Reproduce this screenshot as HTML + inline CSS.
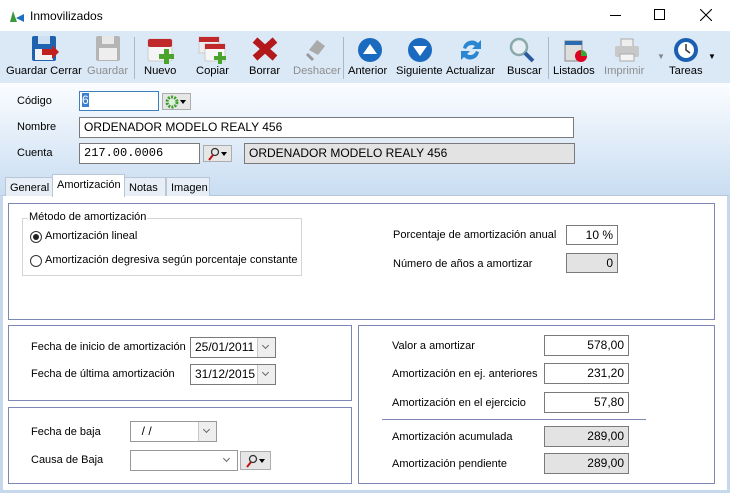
<!DOCTYPE html>
<html><head><meta charset="utf-8"><style>
*{box-sizing:border-box;margin:0;padding:0}
body{width:730px;height:493px;overflow:hidden;font-family:"Liberation Sans",sans-serif;font-size:11px;color:#000;position:relative;background:#fff}
.a{position:absolute}
.tb{left:0;top:31px;width:730px;height:52px;background:#dbe8f6}
.form{left:0;top:83px;width:730px;height:112px;background:linear-gradient(#fbfdff,#c9ddf2)}
.lbl{position:absolute;font-size:11px;white-space:nowrap}
.tl{position:absolute;top:65px;font-size:11.2px;white-space:nowrap;text-align:center}
.in{position:absolute;background:#fff;border:1px solid #7a7a7a;font-size:12px;padding:2px 4px;white-space:nowrap;overflow:hidden}
.g{background:#e3e3e3}
.r{text-align:right}
.pan{position:absolute;border:1px solid #7d87b5;background:#fff}
.btn{position:absolute;background:#e6e6e6;border:1px solid #adadad}
.dd{position:absolute;width:18px;background:#eee;border-left:1px solid #c8c8c8;top:0;bottom:0;right:0}
.dd:after{content:"";position:absolute;left:5px;top:5px;width:4px;height:4px;border-right:1px solid #666;border-bottom:1px solid #666;transform:rotate(45deg)}
.tab{position:absolute;top:177px;height:19px;border:1px solid #b8c6d8;border-bottom:none;background:#e8eef6;font-size:11px;padding:4px 4px}
</style></head><body>
<svg class="a" style="left:9px;top:9px" width="16" height="14"><polygon points="1,13 4,2 8,13" fill="#3a9a3a"/><polygon points="7,9 15,5 15,13" fill="#1f6fc0"/></svg>
<div class="lbl" style="left:30px;top:9px;font-size:12px">Inmovilizados</div>
<div class="a" style="left:610px;top:15px;width:11px;height:1px;background:#000"></div>
<div class="a" style="left:654px;top:9px;width:11px;height:11px;border:1px solid #000"></div>
<svg class="a" style="left:700px;top:9px" width="12" height="12"><path d="M0 0L12 12M12 0L0 12" stroke="#000" stroke-width="1.1"/></svg>

<div class="a tb"></div>
<svg class="a" style="left:30px;top:35px" width="30" height="28"><rect x="2" y="1" width="24" height="25" rx="2" fill="#1f62b0"/><rect x="8" y="1" width="12" height="8" fill="#cfe0f2"/><rect x="5" y="14" width="18" height="11" fill="#f2f2f2"/><path d="M12 14h10v-4l7 7-7 7v-4h-10z" fill="#c02020"/></svg>
<svg class="a" style="left:95px;top:35px" width="26" height="28"><rect x="1" y="1" width="24" height="25" rx="2" fill="#b5b5b5"/><rect x="7" y="1" width="12" height="8" fill="#e8e8e8"/><rect x="4" y="13" width="18" height="12" fill="#eee"/></svg>
<div class="a" style="left:134px;top:37px;width:1px;height:42px;background:#a9b7c8"></div>
<svg class="a" style="left:147px;top:36px" width="30" height="28"><rect x="1" y="3" width="24" height="22" rx="2" fill="#f4f4f4" stroke="#ccc"/><rect x="1" y="3" width="24" height="8" rx="2" fill="#c0282a"/><path d="M17 13h5v5h5v5h-5v5h-5v-5h-5v-5h5z" fill="#4aa32d"/></svg>
<svg class="a" style="left:198px;top:35px" width="30" height="30"><rect x="1" y="2" width="20" height="16" fill="#eee" stroke="#ccc"/><rect x="1" y="2" width="20" height="5" fill="#c0282a"/><rect x="7" y="9" width="20" height="17" fill="#f6f6f6" stroke="#ccc"/><rect x="7" y="9" width="20" height="5" fill="#c0282a"/><path d="M20 17h4v4h4v4h-4v4h-4v-4h-4v-4h4z" fill="#4aa32d"/></svg>
<svg class="a" style="left:252px;top:37px" width="26" height="24"><path d="M3 3L23 21M23 3L3 21" stroke="#b3181b" stroke-width="7"/></svg>
<svg class="a" style="left:303px;top:36px" width="26" height="26"><path d="M6 14l8-10 8 6-7 9z" fill="#aaa"/><path d="M4 18l6 6" stroke="#999" stroke-width="3"/></svg>
<div class="a" style="left:343px;top:37px;width:1px;height:42px;background:#a9b7c8"></div>
<svg class="a" style="left:357px;top:37px" width="26" height="26"><circle cx="13" cy="13" r="12" fill="#1a6ac0"/><polygon points="13,7 20,17 6,17" fill="#fff"/></svg>
<svg class="a" style="left:407px;top:37px" width="26" height="26"><circle cx="13" cy="13" r="12" fill="#1a6ac0"/><polygon points="13,19 20,9 6,9" fill="#fff"/></svg>
<svg class="a" style="left:457px;top:36px" width="28" height="28"><path d="M6 12a9 9 0 0 1 15-5l3-3v9h-9l3-3a6 6 0 0 0-9 3z" fill="#2a86d0"/><path d="M22 16a9 9 0 0 1-15 5l-3 3v-9h9l-3 3a6 6 0 0 0 9-3z" fill="#2a86d0"/></svg>
<svg class="a" style="left:508px;top:36px" width="28" height="28"><circle cx="11" cy="11" r="8" fill="#e8eef5" stroke="#8aa" stroke-width="2.5"/><path d="M17 17l8 8" stroke="#2a5aa0" stroke-width="4"/></svg>
<div class="a" style="left:548px;top:37px;width:1px;height:42px;background:#a9b7c8"></div>
<svg class="a" style="left:562px;top:35px" width="26" height="28"><rect x="3" y="6" width="17" height="20" fill="#ddd" stroke="#888"/><rect x="3" y="6" width="17" height="4" fill="#2a6ab0"/><circle cx="19" cy="21" r="6" fill="#d02"/><path d="M19 21v-6a6 6 0 0 1 6 6z" fill="#3a3"/></svg>
<svg class="a" style="left:613px;top:37px" width="28" height="26"><rect x="8" y="2" width="12" height="8" fill="#eee" stroke="#aaa"/><rect x="2" y="9" width="24" height="11" rx="2" fill="#c8c8c8"/><rect x="7" y="17" width="14" height="7" fill="#f4f4f4" stroke="#aaa"/></svg>
<div class="lbl" style="left:657px;top:52px;font-size:8px;color:#888">▼</div>
<svg class="a" style="left:672px;top:36px" width="28" height="28"><circle cx="14" cy="14" r="12" fill="#1a5fb0"/><circle cx="14" cy="14" r="8" fill="#fff"/><path d="M14 8v6l4 3" stroke="#333" stroke-width="1.5" fill="none"/></svg>
<div class="lbl" style="left:708px;top:52px;font-size:8px">▼</div>
<div class="tl" style="left:6px">Guardar Cerrar</div>
<div class="tl" style="left:87px;color:#8d8d8d">Guardar</div>
<div class="tl" style="left:144px">Nuevo</div>
<div class="tl" style="left:196px">Copiar</div>
<div class="tl" style="left:249px">Borrar</div>
<div class="tl" style="left:293px;color:#8d8d8d">Deshacer</div>
<div class="tl" style="left:348px">Anterior</div>
<div class="tl" style="left:396px">Siguiente</div>
<div class="tl" style="left:446px">Actualizar</div>
<div class="tl" style="left:507px">Buscar</div>
<div class="tl" style="left:553px">Listados</div>
<div class="tl" style="left:604px;color:#8d8d8d">Imprimir</div>
<div class="tl" style="left:669px">Tareas</div>

<div class="a form"></div>
<div class="lbl" style="left:17px;top:95px">Código</div>
<div class="in" style="left:79px;top:91px;width:80px;height:20px;border-color:#3c7fc0;padding:1px 2px"><span style="background:#3a80d0;color:#fff">6</span></div>
<div class="btn" style="left:162px;top:93px;width:29px;height:17px"><svg class="a" style="left:2px;top:1px" width="24" height="14"><circle cx="7" cy="7" r="5" fill="none" stroke="#3aa02a" stroke-width="3" stroke-dasharray="2 1.2"/><circle cx="7" cy="7" r="2" fill="#cfc"/><polygon points="15,5 21,5 18,9" fill="#000"/></svg></div>
<div class="lbl" style="left:17px;top:121px">Nombre</div>
<div class="in" style="left:79px;top:117px;width:495px;height:21px">ORDENADOR MODELO REALY 456</div>
<div class="lbl" style="left:17px;top:147px">Cuenta</div>
<div class="in" style="left:79px;top:143px;width:121px;height:21px;font-family:'Liberation Mono',monospace;font-size:12px">217.00.0006</div>
<div class="btn" style="left:203px;top:145px;width:29px;height:17px"><svg class="a" style="left:2px;top:1px" width="24" height="14"><circle cx="9" cy="5" r="3.5" fill="none" stroke="#333" stroke-width="1.3"/><path d="M7 8l-4 5" stroke="#c01010" stroke-width="2"/><polygon points="15,5 21,5 18,9" fill="#000"/></svg></div>
<div class="in g" style="left:244px;top:143px;width:331px;height:21px">ORDENADOR MODELO REALY 456</div>

<div class="a" style="left:0;top:195px;width:730px;height:298px;background:#fff;border-left:3px solid #c6d8ec;border-right:3px solid #c6d8ec;border-top:1px solid #b8c6d8"></div>
<div class="tab" style="left:5px;width:48px">General</div>
<div class="tab" style="left:124px;width:42px">Notas</div>
<div class="tab" style="left:166px;width:44px">Imagen</div>
<div class="tab" style="left:52px;top:174px;height:23px;width:73px;background:#fff">Amortización</div>

<div class="pan" style="left:8px;top:203px;width:707px;height:117px"></div>
<div class="a" style="left:22px;top:218px;width:280px;height:58px;border:1px solid #d5d5d5"></div>
<div class="lbl" style="left:28px;top:211px;background:#fff;padding:0 1px">Método de amortización</div>
<div class="a" style="left:30px;top:231px;width:12px;height:12px;border:1px solid #333;border-radius:50%"><div class="a" style="left:2px;top:2px;width:6px;height:6px;border-radius:50%;background:#222"></div></div>
<div class="lbl" style="left:45px;top:230px">Amortización lineal</div>
<div class="a" style="left:30px;top:255px;width:12px;height:12px;border:1px solid #333;border-radius:50%"></div>
<div class="lbl" style="left:45px;top:254px">Amortización degresiva según porcentaje constante</div>
<div class="lbl" style="left:393px;top:229px">Porcentaje de amortización anual</div>
<div class="in r" style="left:566px;top:225px;width:52px;height:20px">10 %</div>
<div class="lbl" style="left:393px;top:258px">Número de años a amortizar</div>
<div class="in g r" style="left:566px;top:253px;width:52px;height:20px">0</div>

<div class="pan" style="left:8px;top:325px;width:344px;height:76px"></div>
<div class="lbl" style="left:31px;top:341px">Fecha de inicio de amortización</div>
<div class="in" style="left:190px;top:337px;width:86px;height:21px">25/01/2011<div class="dd"></div></div>
<div class="lbl" style="left:31px;top:368px">Fecha de última amortización</div>
<div class="in" style="left:190px;top:364px;width:86px;height:21px">31/12/2015<div class="dd"></div></div>

<div class="pan" style="left:8px;top:407px;width:344px;height:77px"></div>
<div class="lbl" style="left:31px;top:426px">Fecha de baja</div>
<div class="in" style="left:130px;top:421px;width:87px;height:21px;border-color:#999">&nbsp; / /<div class="dd"></div></div>
<div class="lbl" style="left:31px;top:454px">Causa de Baja</div>
<div class="in" style="left:130px;top:450px;width:108px;height:21px;border-color:#999"><div class="dd" style="background:#fff;border:none"></div></div>
<div class="btn" style="left:240px;top:451px;width:31px;height:19px"><svg class="a" style="left:3px;top:2px" width="24" height="14"><circle cx="9" cy="5" r="3.5" fill="none" stroke="#333" stroke-width="1.3"/><path d="M7 8l-4 5" stroke="#c01010" stroke-width="2"/><polygon points="15,5 21,5 18,9" fill="#000"/></svg></div>

<div class="pan" style="left:358px;top:325px;width:357px;height:159px"></div>
<div class="lbl" style="left:392px;top:340px">Valor a amortizar</div>
<div class="in r" style="left:544px;top:335px;width:85px;height:21px">578,00</div>
<div class="lbl" style="left:392px;top:368px">Amortización en ej. anteriores</div>
<div class="in r" style="left:544px;top:363px;width:85px;height:21px">231,20</div>
<div class="lbl" style="left:392px;top:397px">Amortización en el ejercicio</div>
<div class="in r" style="left:544px;top:392px;width:85px;height:21px">57,80</div>
<div class="a" style="left:382px;top:419px;width:264px;height:1px;background:#7d87b5"></div>
<div class="lbl" style="left:392px;top:431px">Amortización acumulada</div>
<div class="in g r" style="left:544px;top:426px;width:85px;height:21px">289,00</div>
<div class="lbl" style="left:392px;top:458px">Amortización pendiente</div>
<div class="in g r" style="left:544px;top:453px;width:85px;height:21px">289,00</div>
<div class="a" style="left:0;top:490px;width:730px;height:3px;background:#c6d8ec"></div>
</body></html>
